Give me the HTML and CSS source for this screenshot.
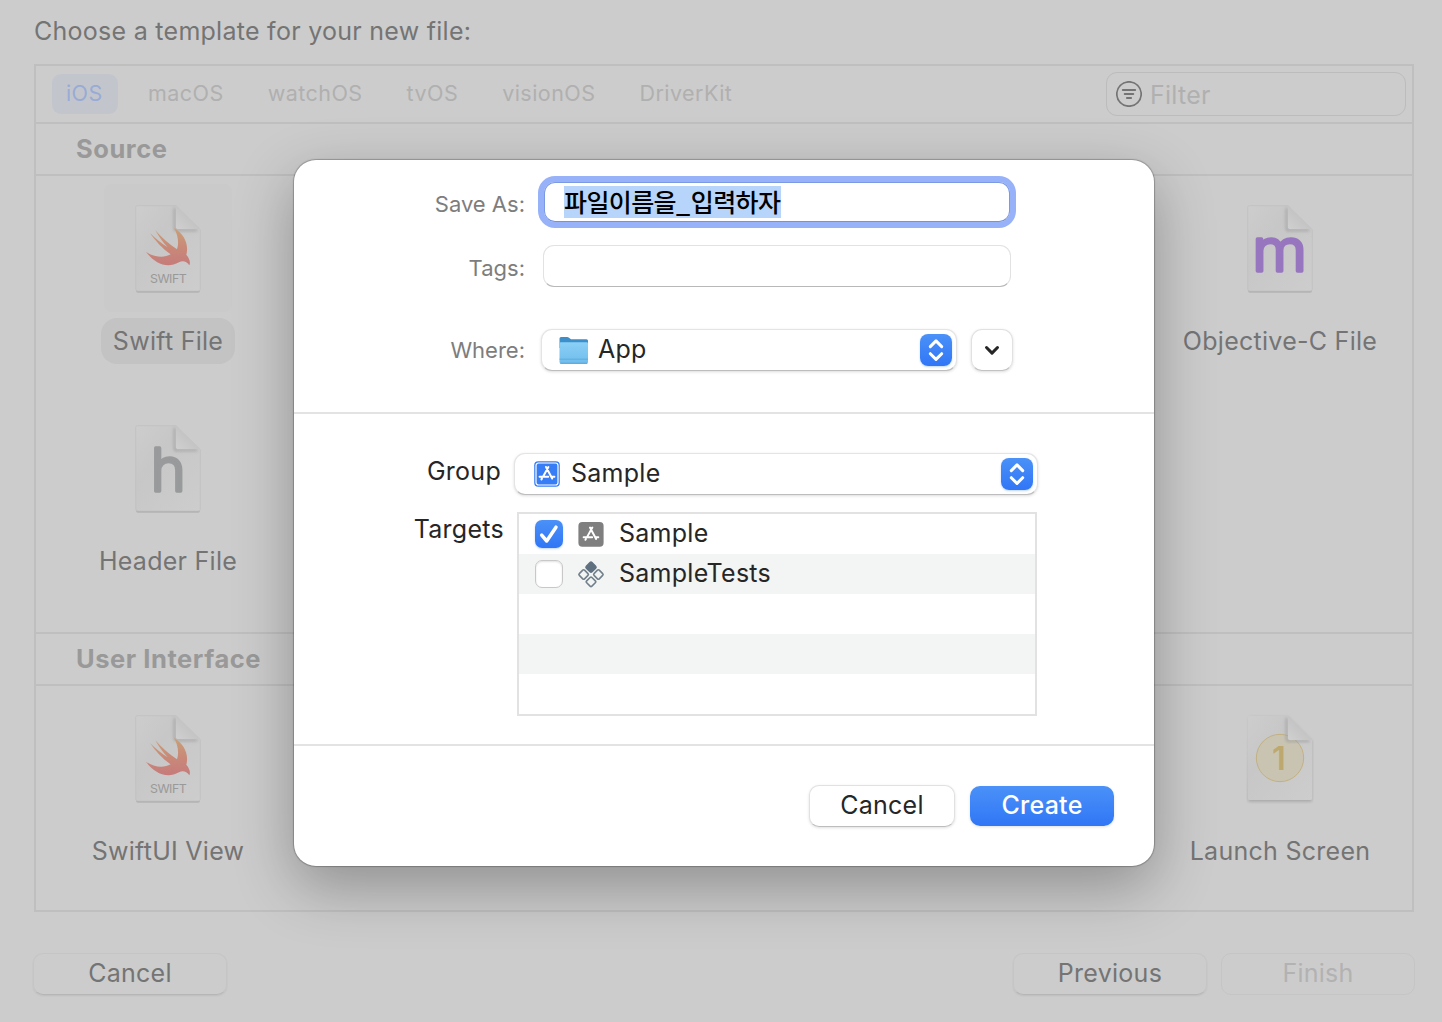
FILE: index.html
```html
<!DOCTYPE html>
<html lang="ko">
<head>
<meta charset="utf-8">
<title>New File</title>
<link rel="stylesheet" href="styles.css">
</head>
<body>
<svg class="defs" width="0" height="0" aria-hidden="true">
  <defs>
    <linearGradient id="bird" x1="0" y1="0" x2="0" y2="1"><stop offset="0" stop-color="#c9a077"/><stop offset=".5" stop-color="#c98a78"/><stop offset="1" stop-color="#c67b7b"/></linearGradient>
    <linearGradient id="fold" x1="0" y1="1" x2="1" y2="0"><stop offset="0" stop-color="#d0d0d0"/><stop offset=".5" stop-color="#c4c4c4"/></linearGradient>
    <linearGradient id="paper" x1="0" y1="0" x2="1" y2="1"><stop offset="0" stop-color="#cdcdcd"/><stop offset=".35" stop-color="#c7c7c7"/><stop offset="1" stop-color="#cdcdcd"/></linearGradient>
    <filter id="soft" x="-30%" y="-30%" width="160%" height="160%"><feGaussianBlur stdDeviation="4"/></filter>
    <symbol id="page" viewBox="132 72 204 270">
      <path d="M142 81H258L330 151V332q0 6-6 6H144q-6 0-6-6V85q0-4 4-4z" fill="#b2b2b2"/>
      <path d="M142 77H258L331 149V327q0 6-6 6H143q-6 0-6-6V82q0-5 5-5z" fill="url(#paper)" stroke="#bebebe" stroke-width="2"/>
      <path d="M254 84V146q0 5 5 5H322" fill="none" stroke="#979797" stroke-width="6" opacity=".75" filter="url(#soft)"/>
      <path d="M258 77L330 147H263q-5 0-5-5z" fill="url(#fold)"/>
    </symbol>
    <symbol id="swift" viewBox="132 72 204 270">
      <path d="M252 143C284 163 297 194 289 224C299 236 302 247 298 256C290 244 278 241 267 247C230 267 193 250 168 215C192 232 221 235 242 223C217 206 196 182 180 159C196 175 215 191 233 202C219 188 206 169 196 151C216 174 238 193 261 208C268 188 263 162 252 143Z" fill="url(#bird)"/>
    </symbol>
    <symbol id="appstore" viewBox="0 0 26 26">
      <g fill="none" stroke="#fff" stroke-width="2" stroke-linecap="round"><path d="M14.4 6L9 15.7M12 6L18.2 17.5M5.6 15.7H14.2M18.3 15.7H20.4M7.9 17.6L7.4 18.4"/></g>
    </symbol>
    <linearGradient id="folderFront" x1="0" y1="0" x2="0" y2="1"><stop offset="0" stop-color="#8bd0f7"/><stop offset="1" stop-color="#6fbcec"/></linearGradient>
  </defs>
</svg>

<main class="window">
  <h1 class="title">Choose a template for your new file:</h1>
  <section class="browser">
    <nav class="tabs">
      <span class="tab tab-active">iOS</span>
      <span class="tab">macOS</span>
      <span class="tab">watchOS</span>
      <span class="tab">tvOS</span>
      <span class="tab">visionOS</span>
      <span class="tab">DriverKit</span>
      <div class="filter">
        <svg width="26" height="26" viewBox="0 0 26 26" fill="none" stroke="#747474" stroke-linecap="round"><circle cx="13" cy="13" r="12.2" stroke-width="1.7"/><path d="M6.8 9H19.2M8.7 13H17.3M10.9 17H15.1" stroke-width="1.9"/></svg>
        <span>Filter</span>
      </div>
    </nav>
    <h2 class="group-title">Source</h2>
    <div class="grid grid-source">
      <div class="item selected">
        <div class="thumb"><svg width="68" height="90" viewBox="132 72 204 270"><use href="#page" x="132" y="72" width="204" height="270"/><use href="#swift" x="132" y="72" width="204" height="270"/><text x="235" y="309" class="ext" textLength="110">SWIFT</text></svg></div>
        <span class="name">Swift File</span>
      </div>
      <div class="item">
        <div class="thumb"><svg width="68" height="90" viewBox="132 72 204 270"><use href="#page" x="132" y="72" width="204" height="270"/><g transform="translate(233 273.500) scale(1.08 1)"><text class="glyph glyph-m">m</text></g></svg></div>
        <span class="name">Objective-C File</span>
      </div>
      <div class="item">
        <div class="thumb"><svg width="68" height="90" viewBox="132 72 204 270"><use href="#page" x="132" y="72" width="204" height="270"/><text x="235" y="273.500" class="glyph glyph-h">h</text></svg></div>
        <span class="name">Header File</span>
      </div>
    </div>
    <h2 class="group-title group-title-ui">User Interface</h2>
    <div class="grid">
      <div class="item">
        <div class="thumb"><svg width="68" height="90" viewBox="132 72 204 270"><use href="#page" x="132" y="72" width="204" height="270"/><use href="#swift" x="132" y="72" width="204" height="270"/><text x="235" y="309" class="ext" textLength="110">SWIFT</text></svg></div>
        <span class="name">SwiftUI View</span>
      </div>
      <div class="item">
        <div class="thumb"><svg width="68" height="90" viewBox="132 72 204 270"><path d="M142 82H258L330 154V331q0 4-4 4H142q-4 0-4-4z" fill="#8c8c8c" opacity=".55" filter="url(#soft)"/><path d="M142 78H258L330 150V326q0 4-4 4H142q-4 0-4-4V82q0-4 4-4z" fill="url(#paper)"/><circle cx="234" cy="204" r="71" fill="#c9c4b2" stroke="#c1ac76" stroke-width="2.5"/><text x="231" y="240" class="one">1</text><path d="M254 84V148q0 5 5 5H322" fill="none" stroke="#979797" stroke-width="6" opacity=".75" filter="url(#soft)"/><path d="M258 78L330 150H263q-5 0-5-5z" fill="url(#fold)"/></svg></div>
        <span class="name">Launch Screen</span>
      </div>
    </div>
  </section>
  <footer class="actions">
    <button class="btn-dim">Cancel</button>
    <button class="btn-dim push">Previous</button>
    <button class="btn-dim off">Finish</button>
  </footer>
</main>

<div class="sheet" role="dialog">
  <form class="save">
    <div class="row row-name"><label>Save As:</label><div class="field focus"><span class="selection">파일이름을<i>_</i>입력하자</span></div></div>
    <div class="row row-tags"><label>Tags:</label><div class="field"></div></div>
    <div class="row row-where"><label>Where:</label>
      <div class="popup popup-where">
        <svg class="folder" width="32" height="30" viewBox="0 0 32 30"><path d="M1.5 2.5q0-1.5 1.5-1.5h6.2q1 0 1.8.7l2 1.5H28.500q1.500 0 1.500 1.500V12H1.500z" fill="#3d8fca"/><path d="M1.500 7.500q0-1.200 1.200-1.200H28.800q1.200 0 1.200 1.200V26q0 1.500-1.500 1.500H3q-1.500 0-1.500-1.500z" fill="url(#folderFront)"/><path d="M1.500 23.200H30" stroke="#58a6d8" stroke-width=".8"/><path d="M2.200 27.300H29.300" stroke="#519fcf" stroke-width="1"/></svg>
        <span class="value">App</span>
        <span class="stepper"><svg width="32" height="32" viewBox="0 0 32 32"><path d="M10.300 12.600L16 6.900L21.700 12.600M10.300 19.700L16 25.400L21.700 19.700"/></svg></span>
      </div>
      <div class="expand"><svg width="16" height="12" viewBox="0 0 16 12"><path d="M2.500 3.500L8 9.100L13.500 3.500"/></svg></div>
    </div>
  </form>
  <div class="options">
    <div class="opt-group"><label>Group</label>
      <div class="popup popup-group">
        <svg width="26" height="26" viewBox="0 0 26 26"><rect x=".2" y=".2" width="25.600" height="25.600" rx="4" fill="#377df6"/><rect x="2" y="2" width="22" height="22" rx="2.500" fill="none" stroke="#fff" stroke-width="1.200"/><use href="#appstore" width="26" height="26"/></svg>
        <span class="value">Sample</span>
        <span class="stepper"><svg width="32" height="32" viewBox="0 0 32 32"><path d="M10.300 12.600L16 6.900L21.700 12.600M10.300 19.700L16 25.400L21.700 19.700"/></svg></span>
      </div>
    </div>
    <div class="opt-targets"><label>Targets</label>
      <div class="table">
        <div class="target"><span class="check on"><svg width="28" height="28" viewBox="0 0 28 28"><path d="M6.700 15.200L11.700 21L21 7.200"/></svg></span>
          <svg width="26" height="26" viewBox="0 0 26 26"><rect x=".4" y=".9" width="25.200" height="24.800" rx="4" fill="#7f7f7f"/><g transform="translate(.1 .600) scale(.99)"><use href="#appstore" width="26" height="26"/></g></svg>
          <span class="value">Sample</span></div>
        <div class="target"><span class="check"></span>
          <svg width="28" height="28" viewBox="0 0 28 28" fill="none" stroke="#73808c" stroke-width="1.600"><g transform="translate(0 .5) rotate(45 14 14)"><rect x="4.900" y="4.900" width="7.800" height="7.800" rx="1.300" fill="#5f7180" stroke="#5f7180"/><rect x="15.500" y="5.100" width="7.400" height="7.400" rx="1.300"/><rect x="5.100" y="15.500" width="7.400" height="7.400" rx="1.300"/><rect x="15.500" y="15.500" width="7.400" height="7.400" rx="1.300"/></g></svg>
          <span class="value">SampleTests</span></div>
        <div class="target"></div>
        <div class="target"></div>
        <div class="target"></div>
      </div>
    </div>
  </div>
  <div class="sheet-actions">
    <button class="btn">Cancel</button>
    <button class="btn primary">Create</button>
  </div>
</div>
</body>
</html>
```
FILE: styles.css
```css
* { box-sizing: border-box; }
body {
  margin: 0;
  width: 1442px;
  height: 1022px;
  overflow: hidden;
  background: #ccc;
  font-family: Inter, "Noto Sans CJK KR", sans-serif;
  font-size: 25px;
  letter-spacing: .27px;
  color: #747474;
  white-space: nowrap;
}
.defs { position: absolute; }
h1, h2 { margin: 0; font-size: 25px; }
svg { display: block; flex: none; }
button { font: inherit; letter-spacing: inherit; padding: 0; margin: 0; }

.window { padding: 0 27px 0 34px; display: flex; flex-direction: column; }
.title { height: 64px; line-height: 62px; font-weight: 400; }
.browser { width: 1380px; height: 848px; border: 2px solid #bfbfbf; }

.tabs { display: flex; align-items: center; height: 58px; padding: 0 6px 0 16px; border-bottom: 2px solid #bfbfbf; font-size: 21.500px; color: #b0b0b0; }
.tab { height: 40px; line-height: 39px; padding: 0 14px; margin-right: 16px; letter-spacing: .45px; }
.tab-active { width: 66px; background: #c2c6cc; color: #99abd5; border-radius: 9px; letter-spacing: .4px; }
.filter { margin-left: auto; width: 300px; height: 44px; display: flex; align-items: center; gap: 8px; padding: 0 9px; border: 1px solid #bcbcbc; border-radius: 11px; font-size: 25px; }
.filter span { padding-top: 2px; }

.group-title { height: 52px; padding-left: 40px; line-height: 50px; border-bottom: 2px solid #bfbfbf; color: #999; font-size: 25.500px; font-weight: 700; letter-spacing: .55px; }
.group-title-ui { border-top: 2px solid #bfbfbf; height: 54px; }
.grid { display: grid; grid-template-columns: 264px 264px; justify-content: space-between; grid-auto-rows: 220px; padding-top: 8px; }
.grid-source { height: 456px; }
.item { display: flex; flex-direction: column; align-items: center; }
.thumb { width: 128px; height: 128px; padding-top: 20px; display: flex; justify-content: center; border-radius: 8px; }
.name { height: 46px; line-height: 47px; margin-top: 6px; padding: 0 12px; border-radius: 16px; }
.selected .thumb { background: #cacaca; }
.selected .name { background: #c3c3c3; }
.ext { font-size: 37px; letter-spacing: 0; fill: #999; text-anchor: middle; }
.glyph { text-anchor: middle; letter-spacing: 0; font-weight: 300; stroke-width: 10; stroke-linejoin: round; }
.glyph-m { font-size: 174px; fill: #9876bf; stroke: #9876bf; }
.glyph-h { font-size: 178px; fill: #989a9b; stroke: #989a9b; }
.one { font-size: 98px; letter-spacing: 0; font-weight: 600; fill: #bda86f; text-anchor: middle; }

.actions { display: flex; gap: 14px; margin-top: 41px; width: 1381px; }
.btn-dim { width: 194px; height: 42px; margin-left: -1px; border: 1px solid #c5c5c5; border-bottom-color: #b6b6b6; border-radius: 10px; background: transparent; color: #747474; line-height: 36px; padding-bottom: 2px; box-shadow: 0 1px 2px rgba(0, 0, 0, .07); }
.push { margin-left: auto; }
.off { margin-left: 0; color: #b2b2b2; border-color: #c5c5c5; box-shadow: none; }

.sheet { position: absolute; left: 294px; top: 160px; width: 860px; height: 706px; border-radius: 22px; background: #fff; color: #262626; box-shadow: 0 0 1px 1px rgba(0, 0, 0, .24), 0 20px 60px rgba(0, 0, 0, .3); }
.save { height: 254px; border-bottom: 2px solid #e3e3e3; padding-top: 22px; }
.row { display: flex; align-items: center; }
.row label { width: 231px; text-align: right; color: #7d7d7d; font-size: 22px; letter-spacing: 0; }
.row-name { height: 40px; }
.row-tags { height: 42px; margin-top: 23px; }
.row-name label, .row-tags label { padding-top: 4px; }
.row-where { height: 42px; margin-top: 42px; }
.field { margin-left: 18px; width: 468px; height: 42px; border: 1px solid #e2e2e2; border-bottom: 1px solid #b8b8b8; border-radius: 11px; }
.focus { margin-left: 19px; width: 466px; height: 40px; border: 1px solid #7c99e4; border-bottom-color: #7592d8; box-shadow: 0 0 0 6px #97b2f8; padding: 3px 0 0 19px; }
.selection { display: block; width: 217px; height: 32px; line-height: 31px; background: #b7d5fb; color: #000; font-family: "Noto Sans CJK KR", sans-serif; font-size: 25px; font-weight: 500; letter-spacing: -.600px; }
.selection i { font-style: normal; font-weight: 700; letter-spacing: .600px; }
.popup { display: flex; align-items: center; height: 42px; border: 1px solid #e4e4e4; border-bottom-color: #bdbdbd; border-radius: 11px; box-shadow: 0 1px 3px rgba(0, 0, 0, .14); background: #fff; }
.popup-where { margin-left: 16px; width: 416px; padding: 0 4px 0 16px; gap: 8px; }
.popup-group { margin-left: 13px; width: 524px; padding: 0 4px 0 19px; gap: 11px; }
.value { padding-bottom: 2px; }
.folder { margin-top: 2px; }
.stepper { margin-left: auto; width: 32px; height: 32px; border-radius: 8px; background: linear-gradient(#4b91f8, #3076f6); box-shadow: 0 1px 2px rgba(48, 118, 246, .3); }
.stepper path, .expand path, .check path { fill: none; stroke: #fff; stroke-width: 3; stroke-linecap: round; stroke-linejoin: round; }
.expand { margin-left: 14px; width: 42px; height: 42px; display: flex; align-items: center; justify-content: center; border: 1px solid #e1e1e1; border-bottom-color: #c2c2c2; border-radius: 11px; box-shadow: 0 1px 3px rgba(0, 0, 0, .14); }
.expand path { stroke: #262626; }

.options { height: 332px; padding-top: 39px; border-bottom: 2px solid #e3e3e3; }
.opt-group { display: flex; height: 42px; }
.opt-group label { width: 207px; text-align: right; line-height: 37px; }
.opt-targets { display: flex; margin-top: 17px; }
.opt-targets label { width: 210px; text-align: right; line-height: 34px; }
.table { margin-left: 13px; width: 520px; height: 204px; border: 2px solid #e2e2e2; }
.target { display: flex; align-items: center; height: 40px; padding-left: 16px; line-height: 38px; }
.target:nth-child(even) { background: #f3f5f4; }
.target > svg { width: 28px; margin: 0 14px; }
.check { width: 28px; height: 28px; border-radius: 7px; border: 1px solid #c8c8c8; background: #fff; box-shadow: inset 0 1px 2px rgba(0, 0, 0, .12); }
.check.on { border: 0; background: linear-gradient(#4b91f8, #3076f6); box-shadow: 0 1px 2px rgba(48, 118, 246, .3); }
.check path { stroke-width: 3.500; }

.sheet-actions { display: flex; justify-content: flex-end; gap: 15px; padding: 39px 40px 0 0; }
.btn { width: 146px; height: 42px; border: 1px solid #e1e1e1; border-bottom-color: #bdbdbd; border-radius: 10px; background: #fff; color: #262626; line-height: 36px; padding-bottom: 2px; box-shadow: 0 1px 3px rgba(0, 0, 0, .13); }
.primary { width: 144px; height: 40px; margin-top: 1px; border: 0; background: linear-gradient(#4b91f8, #3076f6); color: #fff; font-weight: 500; }
```
